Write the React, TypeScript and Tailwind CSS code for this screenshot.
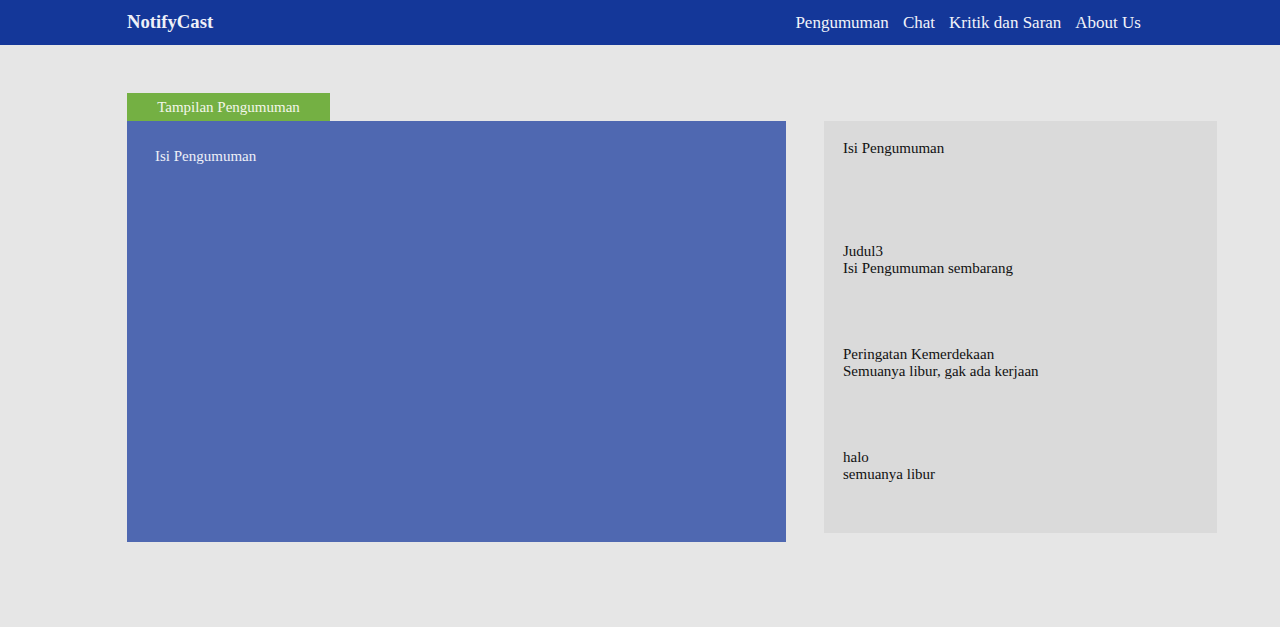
const announcements = [
  { title: "", body: "Isi Pengumuman" },
  { title: "Judul3", body: "Isi Pengumuman sembarang" },
  { title: "Peringatan Kemerdekaan", body: "Semuanya libur, gak ada kerjaan" },
  { title: "halo", body: "semuanya libur" },
];

export default function App() {
  return (
    <div className="min-h-[845px] bg-[#e6e6e6] font-['Liberation_Serif',serif] text-[15px]">
      {/* Navbar */}
      <nav className="h-[45px] bg-[#143799] flex items-center justify-between pl-[127px] pr-[139px]">
        <a className="text-[18.7px] font-bold text-[#eef0f8]">NotifyCast</a>
        <ul className="flex items-center gap-[14px] text-[17px] text-[#f1f3fa]">
          <li>Pengumuman</li>
          <li>Chat</li>
          <li>Kritik dan Saran</li>
          <li>About Us</li>
        </ul>
      </nav>

      <main className="flex items-start gap-[38px] pl-[127px] pt-[48px]">
        {/* Tampilan */}
        <section className="w-[659px]">
          <div className="w-[203px] h-[28px] bg-[#74b043] flex items-center justify-center text-[#f3f6ea]">
            Tampilan Pengumuman
          </div>
          <div className="h-[421px] bg-[#4f68b1] px-[28px] pt-[27px] leading-[17px] text-[#eef0f8]">
            Isi Pengumuman
          </div>
        </section>

        {/* List */}
        <aside className="w-[393px] h-[412px] mt-[28px] bg-[#dadada] px-[19px] pt-[19px] text-[#111]">
          {announcements.map((a, i) => (
            <div key={i} className="h-[103px] leading-[17px]">
              {a.title && <p>{a.title}</p>}
              <p>{a.body}</p>
            </div>
          ))}
        </aside>
      </main>
    </div>
  );
}
